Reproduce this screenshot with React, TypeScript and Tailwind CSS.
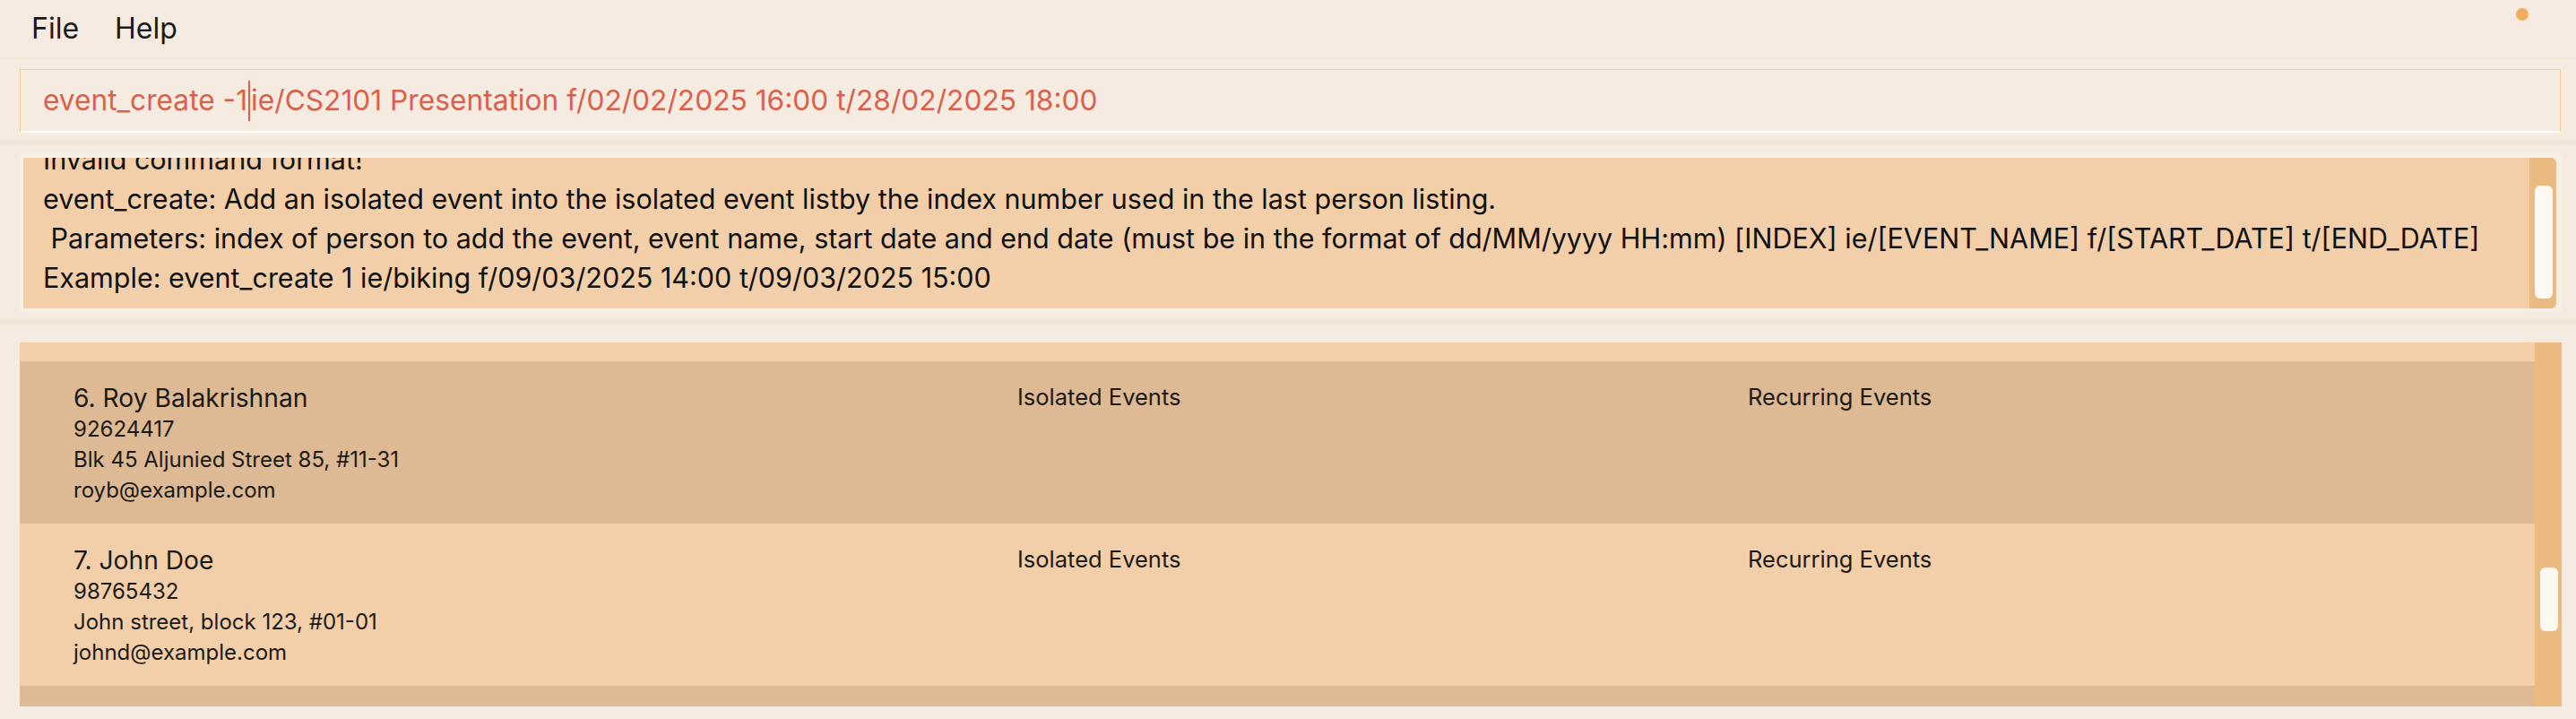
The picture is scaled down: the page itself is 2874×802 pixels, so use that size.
import React from "react";

interface Person {
  index: number;
  name: string;
  phone: string;
  address: string;
  email: string;
}

const persons: Person[] = [
  {
    index: 6,
    name: "Roy Balakrishnan",
    phone: "92624417",
    address: "Blk 45 Aljunied Street 85, #11-31",
    email: "royb@example.com",
  },
  {
    index: 7,
    name: "John Doe",
    phone: "98765432",
    address: "John street, block 123, #01-01",
    email: "johnd@example.com",
  },
];

const resultLines = [
  "Invalid command format!",
  "event_create: Add an isolated event into the isolated event listby the index number used in the last person listing.",
  " Parameters: index of person to add the event, event name, start date and end date (must be in the format of dd/MM/yyyy HH:mm) [INDEX] ie/[EVENT_NAME] f/[START_DATE] t/[END_DATE]",
  "Example: event_create 1 ie/biking f/09/03/2025 14:00 t/09/03/2025 15:00",
];

const PersonCard: React.FC<{ person: Person; dark: boolean }> = ({ person, dark }) => {
  return (
    <div
      className={`flex h-[181px] shrink-0 pl-[60px] pt-[23px] text-[#1c1a17] ${
        dark ? "bg-[#ddb994]" : "bg-[#f2cfa8]"
      }`}
    >
      <div className="w-[1053px] shrink-0">
        <div className="text-[28.2px] leading-[36px]">
          {person.index}. {person.name}
        </div>
        <div className="text-[24px] leading-[34px]">{person.phone}</div>
        <div className="text-[24px] leading-[34px]">{person.address}</div>
        <div className="text-[24px] leading-[34px]">{person.email}</div>
      </div>
      <div className="w-[815px] shrink-0 text-[25.5px] leading-[34px]">Isolated Events</div>
      <div className="text-[25.5px] leading-[34px]">Recurring Events</div>
    </div>
  );
};

export default function App() {
  return (
    <div
      className="flex h-[802px] w-full flex-col overflow-hidden bg-[#f5ebe0]"
      style={{ fontFamily: "Inter, 'Liberation Sans', sans-serif" }}
    >
      {/* menu bar */}
      <div className="relative flex h-[64px] shrink-0 items-center gap-[40px] pl-[35px] text-[32px] text-[#1a1a1a]">
        <span>File</span>
        <span>Help</span>
        <span className="absolute left-[2807px] top-[9px] h-[14px] w-[14px] rounded-full bg-[#f1ad5e]" />
      </div>
      <div className="h-[2px] shrink-0 bg-[#f1e3d5]" />

      {/* command box */}
      <div className="shrink-0 pb-[9px] pl-[22px] pr-[17px] pt-[11px]">
        <div className="flex h-[71px] items-center border border-b-2 border-[#f2cb9f] border-b-white pl-[25px] text-[31.7px] text-[#d9614c]">
          <span>event_create -1</span>
          <span className="mx-[1px] h-[45px] w-[2px] bg-[#d9614c]" />
          <span>ie/CS2101 Presentation f/02/02/2025 16:00 t/28/02/2025 18:00</span>
        </div>
      </div>
      <div className="h-[5px] shrink-0 bg-[#f1e4d6]" />

      {/* result display */}
      <div className="shrink-0 pb-[9px] pl-[22px] pr-[16px] pt-[10px]">
        <div className="bg-[#f7eee5] p-[4px] pr-[6px]">
          <div className="flex h-[168px] overflow-hidden rounded-r-[6px] bg-[#f2cfa8]">
            <div className="flex-1 overflow-hidden pl-[22px]">
              <div className="mt-[-20px] whitespace-pre text-[30.5px] leading-[44px] text-[#111]">
                {resultLines.map((line) => (
                  <div key={line}>{line}</div>
                ))}
              </div>
            </div>
            <div className="w-[30px] shrink-0 bg-[#ebba80] pl-[6px] pt-[31px]">
              <div className="h-[126px] w-[20px] rounded-[6px] bg-[#fcf8f2]" />
            </div>
          </div>
        </div>
      </div>
      <div className="h-[5px] shrink-0 bg-[#f1e4d6]" />

      {/* person list */}
      <div className="flex-1 pl-[22px] pr-[16px] pt-[20px]">
        <div className="flex h-[406px] overflow-hidden">
          <div className="flex flex-1 flex-col overflow-hidden">
            <div className="h-[21px] shrink-0 bg-[#f2cfa8]" />
            {persons.map((p, i) => (
              <PersonCard key={p.index} person={p} dark={i % 2 === 0} />
            ))}
            <div className="h-[23px] shrink-0 bg-[#ddb994]" />
          </div>
          <div className="w-[30px] shrink-0 bg-[#ebba80] pl-[6px] pt-[251px]">
            <div className="h-[71px] w-[20px] rounded-[6px] bg-[#fcf8f2]" />
          </div>
        </div>
      </div>
    </div>
  );
}
